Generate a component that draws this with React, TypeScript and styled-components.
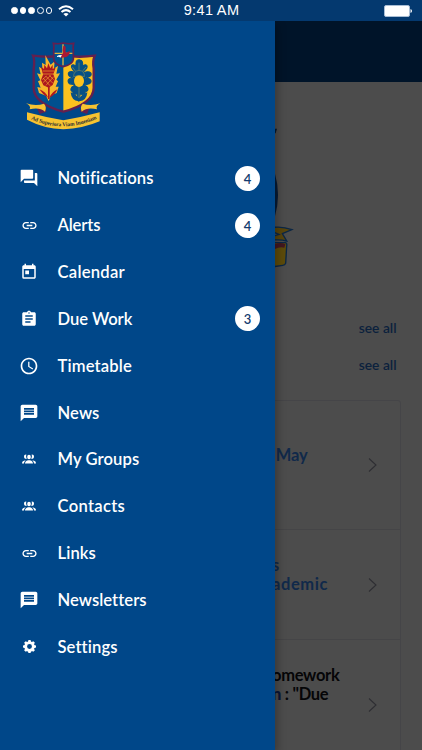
import type { ReactNode } from "react";
import styled, { createGlobalStyle } from "styled-components";
import {
	MdAccessTime,
	MdAssignment,
	MdForum,
	MdLink,
	MdMessage,
	MdToday,
} from "react-icons/md";

const GlobalStyle = createGlobalStyle`
	* {
		box-sizing: border-box;
	}
	body {
		margin: 0;
		background-color: #4c4c4c;
		font-family: Lato, "Liberation Sans", sans-serif;
	}
`;
const Screen = styled.div`
	position: relative;
	width: 422px;
	height: 750px;
	overflow: hidden;
	background-color: #4c4c4c;
`;
const StatusBar = styled.div`
	display: grid;
	grid-template-columns: 1fr auto 1fr;
	align-items: center;
	height: 21px;
	padding: 0 10px 0 11px;
	background-color: #04396f;
	color: #fff;
`;
const Signal = styled.div`
	display: flex;
	align-items: center;
	gap: 2px;
	svg {
		margin-left: 4px;
	}
`;
const Dot = styled.i<{ $filled: boolean }>`
	width: 6.7px;
	height: 6.7px;
	border: 1px solid #fff;
	border-radius: 50%;
	background-color: ${({ $filled }) => ($filled ? "#fff" : "transparent")};
`;
const Clock = styled.time`
	font-family: "Liberation Sans", sans-serif;
	font-size: 14.5px;
	letter-spacing: 0.35px;
	line-height: 21px;
`;
const Battery = styled.svg`
	justify-self: end;
`;
const Header = styled.header`
	height: 61px;
	background-color: #001429;
`;
const Hero = styled.div`
	height: 227px;
	padding: 45px 0 0 275px;
`;
const Section = styled.div`
	display: flex;
	justify-content: flex-end;
	align-items: center;
	height: 37px;
	padding-right: 25.5px;
	color: #0b213d;
	font-size: 13.8px;
	font-weight: 600;
	letter-spacing: 0;
`;
const Card = styled.div`
	margin: 17px 21px 0;
	border: 1px solid #454548;
	border-radius: 3px;
`;
const CardItem = styled.div<{ $height: number }>`
	display: flex;
	align-items: center;
	justify-content: space-between;
	height: ${({ $height }) => $height}px;
	padding: 0 23px 0 250px;
	border-bottom: 1px solid #454547;
`;
const CardText = styled.p<{
	$dark?: boolean;
	$shift: number;
	$spacing: number;
}>`
	margin: 0 0 ${({ $shift }) => $shift}px;
	color: ${({ $dark }) => ($dark ? "#050507" : "#10294a")};
	font-size: 16.5px;
	font-weight: 700;
	letter-spacing: ${({ $spacing }) => $spacing}px;
	line-height: 19.3px;
	white-space: nowrap;
	span {
		display: block;
	}
	b {
		color: #0a1535;
	}
`;
const Drawer = styled.nav`
	position: absolute;
	top: 21px;
	left: 0;
	width: 275px;
	height: 729px;
	padding: 19px 15px 0 20px;
	background-color: #004789;
	box-shadow: 3px 3px 8px rgba(0, 0, 0, 0.25);
	color: #fff;
	clip-path: inset(0 -12px 0 0);
`;
const CrestBox = styled.div`
	height: 115px;
	padding-left: 5px;
`;
const MenuItem = styled.div`
	display: flex;
	align-items: center;
	height: 46.85px;
`;
const MenuIcon = styled.span<{ $size: number }>`
	display: flex;
	justify-content: center;
	width: 18px;
	margin-right: 19.5px;
	svg {
		flex: none;
		width: ${({ $size }) => $size}px;
		height: ${({ $size }) => $size}px;
	}
`;
const Label = styled.span<{ $spacing: number }>`
	flex: 1;
	font-size: 16.6px;
	font-weight: 600;
	letter-spacing: ${({ $spacing }) => $spacing}px;
`;
const Badge = styled.span`
	width: 25px;
	height: 25px;
	border-radius: 50%;
	background-color: #fff;
	color: #143c70;
	font-size: 13px;
	font-weight: 600;
	line-height: 26px;
	text-align: center;
`;

function People() {
	return (
		<svg viewBox="0 0 28 20" fill="currentColor">
			<ellipse cx="14" cy="6" rx="3.7" ry="4.7" />
			<path d="M8.700 1.300C5.800.900 4 2.600 4 5.300c0 2.500 1.600 4.400 3.800 4.400.8 0 1.500-.3 2-.8C8.100 6.600 7.800 3.500 8.700 1.300zM19.300 1.300C22.200.9 24 2.600 24 5.300c0 2.500-1.600 4.400-3.800 4.400-.8 0-1.500-.3-2-.8 1.700-2.300 2-5.400 1.100-7.600z" />
			<path d="M6 19c.2-3.300 1.600-5.200 6-6.600h4c4.400 1.400 5.800 3.300 6 6.600zM0 19c.1-3.400 1.300-5.300 5.300-6.200l2.400.1C5.300 14.200 4.200 16 4 19zM28 19c-.1-3.400-1.300-5.300-5.300-6.200l-2.400.1c2.400 1.300 3.500 3.100 3.700 6.100z" />
		</svg>
	);
}

function Gear() {
	return (
		<svg viewBox="0 0 24 24">
			<circle
				cx="12"
				cy="12"
				r="7"
				fill="none"
				stroke="currentColor"
				strokeWidth="5"
			/>
			{[0, 45, 90, 135, 180, 225, 270, 315].map((angle) => (
				<path
					key={angle}
					d="M9 4L10 0H14L15 4Z"
					fill="currentColor"
					transform={`rotate(${angle} 12 12)`}
				/>
			))}
		</svg>
	);
}

function Crest() {
	return (
		<svg width="76.7" height="91.7" viewBox="75 120 230 275">
			<path
				d="M99 166Q145 175 190 166Q235 175 284 166Q276 180 281 205V263Q281 310 190 335Q101 310 101 263V205Q104 182 99 166Z"
				fill="#00508f"
			/>
			<path
				d="M190 166Q235 175 282 167Q276 182 280 205V263Q279 310 190 335Z"
				fill="#fcc21f"
			/>
			<path
				d="M99 167Q145 174 190 166Q235 174 284 167Q277 182 281 205V263Q281 310 190 335Q101 310 101 263V205Q105 182 99 167Z"
				fill="none"
				stroke="#63204f"
				strokeWidth="7"
			/>
			{/* thistle */}
			<path
				d="M146 304L138 287L117 279L112 261L122 263L114 244L121 241L111 220L122 223L117 201L127 206L126 188L137 195L136 166L152 194L164 184L162 205L174 198L169 221L180 220L169 239L174 244L167 260L176 260L170 279L153 286Z"
				fill="#f6b52b"
			/>
			<g fill="#ad171f">
				<path d="M123 200L132 207L133 194L141 205L145 190L151 205L158 194L158 207L167 202L160 223L165 237L158 255L146 263L130 256L123 240L129 224Z" />
				<path d="M144 261h5v36h-5z" />
				<path d="M144 293Q138 275 118 268Q129 285 144 293ZM148 293Q157 275 172 268Q165 286 148 293Z" />
			</g>
			<path
				d="M126 222H164M128 213H162M129 234L150 257M137 228L159 250M148 226L161 239M161 230L138 256M152 226L129 248M139 228L127 239"
				fill="none"
				stroke="#f7b52d"
				strokeWidth="1.8"
			/>
			{/* oak leaf with acorn */}
			<path
				d="M237 179C226 179 228 191 228 199C220 190 210 194 216 205C219 212 225 213 224 218C210 210 202 218 206 226C209 234 220 229 222 238C208 230 200 241 207 250C211 255 220 250 223 257C211 260 209 273 219 275C215 282 226 285 231 281L236 304L241 281C247 286 257 281 256 275C268 274 266 260 254 257C258 250 267 255 271 249C277 241 269 231 255 238C258 229 269 234 273 226C276 217 265 211 251 219C249 213 256 212 260 205C265 194 255 190 247 199C249 190 249 179 237 179Z"
				fill="#075085"
				stroke="#075085"
				strokeWidth="3"
			/>
			<ellipse cx="237" cy="243" rx="15" ry="18" fill="#fcc21f" />
			<path
				d="M221 230Q220 213 237 211Q255 213 253 230Q237 222 221 230Z"
				fill="#075085"
				stroke="#a49a49"
				strokeWidth="1.5"
			/>
			<path
				d="M237 188V211M217 201L226 213M258 201L248 213M237 261V292M236 292Q217 292 213 280M238 292Q257 292 261 280"
				fill="none"
				stroke="#a49a49"
				strokeWidth="1.6"
			/>
			<path
				d="M236 304Q214 302 212 277Q230 283 237 297Q244 283 262 277Q260 302 238 304Z"
				fill="#075085"
			/>
			{/* small shield */}
			<path
				d="M160 130Q175 133 190 129Q205 133 221 130Q218 141 220 152V178Q218 193 190 200Q163 193 161 178V152Q163 140 160 130Z"
				fill="#00508f"
				stroke="#63204f"
				strokeWidth="5"
			/>
			<path
				d="M189 133V196M164 160H217"
				stroke="#e5b33b"
				strokeWidth="4"
			/>
			<path
				d="M190 138Q196 135 197 144Q195 154 198 158L210 153Q209 169 196 172L183 173Q178 170 185 163Q192 160 188 151Z"
				fill="#ad1732"
			/>
			<path d="M171 168Q179 163 186 166L181 173Q177 169 171 171Z" fill="#fff" />
			{/* ribbon */}
			<path
				d="M110 323L137 319L139 335L119 342ZM269 323L243 319L241 335L261 342Z"
				fill="#63204f"
			/>
			<path
				d="M78 310Q107 319 132 311Q141 320 135 335Q119 321 89 328Q94 318 78 310ZM301 310Q273 319 248 311Q239 320 245 335Q261 321 291 328Q286 318 301 310Z"
				fill="#f7c331"
			/>
			<path
				d="M81 337Q137 352 190 361Q243 352 299 337V364Q248 386 190 388Q132 386 81 359Z"
				fill="#f7c331"
			/>
			<path id="motto" d="M93 358Q190 401 291 356" fill="none" />
			<text
				fill="#272b34"
				fontFamily="Liberation Serif, serif"
				fontSize="17"
				fontWeight="700"
			>
				<textPath href="#motto" textLength="204" lengthAdjust="spacingAndGlyphs">
					Ad Superiora Viam Inueniam
				</textPath>
			</text>
		</svg>
	);
}

function Chevron() {
	return (
		<svg width="9" height="16" viewBox="0 0 9 16">
			<path
				d="M1 1.500L8 8L1 14.500"
				fill="none"
				stroke="#2e2e33"
				strokeWidth="1.1"
			/>
		</svg>
	);
}

interface Item {
	label: string;
	icon: ReactNode;
	size: number;
	spacing: number;
	count?: number;
}

const items: Item[] = [
	{ label: "Notifications", icon: <MdForum />, size: 20, spacing: 0.14, count: 4 },
	{ label: "Alerts", icon: <MdLink />, size: 17, spacing: -0.15, count: 4 },
	{ label: "Calendar", icon: <MdToday />, size: 18, spacing: 0.27 },
	{ label: "Due Work", icon: <MdAssignment />, size: 18, spacing: -0.05, count: 3 },
	{ label: "Timetable", icon: <MdAccessTime />, size: 20, spacing: 0.15 },
	{ label: "News", icon: <MdMessage />, size: 20, spacing: 0.1 },
	{ label: "My Groups", icon: <People />, size: 14, spacing: 0.1 },
	{ label: "Contacts", icon: <People />, size: 14, spacing: 0.3 },
	{ label: "Links", icon: <MdLink />, size: 17, spacing: 0.1 },
	{ label: "Newsletters", icon: <MdMessage />, size: 20, spacing: 0.05 },
	{ label: "Settings", icon: <Gear />, size: 13, spacing: 0.1 },
];

function App() {
	return (
		<Screen>
			<GlobalStyle />
			<StatusBar>
				<Signal>
					{[0, 1, 2, 3, 4].map((n) => (
						<Dot key={n} $filled={n < 3} />
					))}
					<svg width="16" height="12" viewBox="0 0 16 12">
						<path
							d="M1 4.200Q8-1.800 15 4.200M3.500 7Q8 3.200 12.500 7"
							fill="none"
							stroke="#fff"
							strokeWidth="2"
						/>
						<path d="M5.400 8.900Q8 6.900 10.600 8.900L8 11.500Z" fill="#fff" />
					</svg>
				</Signal>
				<Clock>9:41 AM</Clock>
				<Battery width="28" height="12" viewBox="0 0 28 12">
					<rect
						x="0.500"
						y="0.500"
						width="25"
						height="11"
						rx="1.500"
						fill="#fff"
						stroke="#a9bed5"
					/>
					<path d="M26.500 4Q28 4.500 28 6T26.500 8Z" fill="#fff" />
				</Battery>
			</StatusBar>
			<Header />
			<Hero>
				<svg width="20" height="142" viewBox="39 50 60 426">
					<path d="M39 55H45L41 69H39Z" fill="#07182c" />
					<path d="M39 190Q57 252 39 318Z" fill="#071b35" />
					<g stroke="#0b2746" strokeWidth="4">
						<path d="M36 351Q62 348 90 358L61 370L74 392Q57 387 36 389V377L51 372L36 366Z" fill="#59450b" />
						<path d="M36 397H70Q76 398 74 408L71 459Q69 465 62 465L36 469Z" fill="#5d4b0a" />
					</g>
					<path d="M39 401Q56 394 70 402L67 412Q51 409 39 416Z" fill="#421720" />
				</svg>
			</Hero>
			<Section>see all</Section>
			<Section>see all</Section>
			<Card>
				<CardItem $height={129}>
					<CardText $shift={19} $spacing={-0.2}>
						<span>&nbsp;May</span>
					</CardText>
					<Chevron />
				</CardItem>
				<CardItem $height={110}>
					<CardText $shift={19} $spacing={0.6}>
						<span>s</span>
						<span>ademic</span>
					</CardText>
					<Chevron />
				</CardItem>
				<CardItem $height={131}>
					<CardText $dark $shift={40} $spacing={-0.3}>
						<span>omework</span>
						<span>
							<b>n</b> : "Due
						</span>
					</CardText>
					<Chevron />
				</CardItem>
			</Card>
			<Drawer>
				<CrestBox>
					<Crest />
				</CrestBox>
				{items.map((item) => (
					<MenuItem key={item.label}>
						<MenuIcon $size={item.size}>{item.icon}</MenuIcon>
						<Label $spacing={item.spacing}>{item.label}</Label>
						{item.count && <Badge>{item.count}</Badge>}
					</MenuItem>
				))}
			</Drawer>
		</Screen>
	);
}

export default App;
